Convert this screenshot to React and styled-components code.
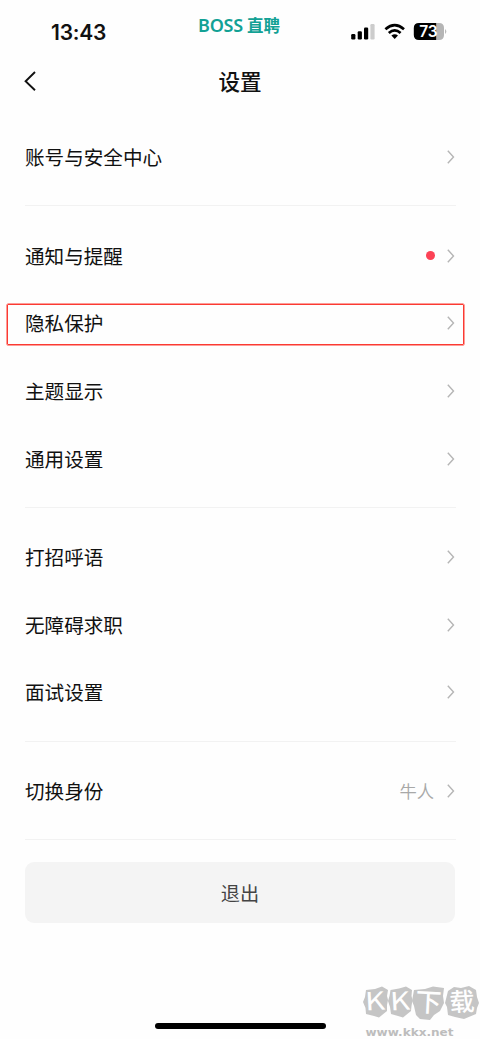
import React from "react";
import styled, { createGlobalStyle } from "styled-components";

const GlobalStyle = createGlobalStyle`
  * { box-sizing: border-box; }
  body { margin: 0; background: #fff; }
`;

const Screen = styled.main`
  position: relative;
  display: flex;
  flex-direction: column;
  width: 480px;
  height: 1039px;
  overflow: hidden;
  background: #fefefe;
  color: #111;
  font-family: "Noto Sans CJK SC", sans-serif;
`;

const StatusBar = styled.header`
  display: grid;
  grid-template-columns: 157px 164px 1fr;
  height: 54px;
`;

const Clock = styled.time`
  padding: 20px 0 0 51px;
  font: 600 21px/26px Inter, sans-serif;
  letter-spacing: -0.2px;
`;

const Brand = styled.div`
  display: flex;
  justify-content: center;
  gap: 4px;
  padding-top: 13px;
  color: #12a195;
  font: 700 16.5px/24px "Noto Sans CJK SC", sans-serif;
`;

const BrandLatin = styled.span`
  font-family: "Noto Sans", sans-serif;
  font-weight: 600;
  font-size: 18px;
  line-height: 25px;
  letter-spacing: -0.2px;
`;

const Indicators = styled.div`
  display: flex;
  align-items: flex-start;
  padding: 23px 0 0 30px;
`;

const IconSlot = styled.span`
  display: flex;
  width: ${(p) => p.$width}px;
`;

const NavBar = styled.nav`
  display: grid;
  grid-template-columns: 80px 320px 80px;
  align-items: center;
  height: 54px;
`;

const BackButton = styled.button`
  display: flex;
  padding: 0 0 0 23px;
  border: 0;
  background: none;
`;

const Title = styled.h1`
  margin: 0;
  text-align: center;
  font-size: 21.6px;
  font-weight: 500;
  line-height: 32px;
`;

const Group = styled.section`
  margin: 0 24px 0 25px;
  padding: 15.4px 0 14.45px;
  border-bottom: 1px solid #f2f2f2;
`;

const Row = styled.div`
  position: relative;
  display: flex;
  align-items: center;
  height: 67.67px;
`;

const Label = styled.span`
  flex: 1;
  font-size: 19.6px;
  line-height: 30px;
`;

const Value = styled.span`
  margin-right: 13px;
  color: #a8a8a8;
  font-size: 17.3px;
  font-weight: 350;
  line-height: 26px;
`;

const Dot = styled.i`
  width: 9px;
  height: 9px;
  margin-right: 12px;
  border-radius: 50%;
  background: #fc4256;
`;

const Highlight = styled.span`
  position: absolute;
  top: 14.7px;
  left: -18.5px;
  width: 457px;
  height: 41px;
  border: 1px solid #fb3a32;
  border-radius: 1px;
  box-shadow: 0 0 0 0.5px #fb3a32;
`;

const ChevronSlot = styled.span`
  display: flex;
  width: 9px;
`;

const LogoutButton = styled.button`
  height: 61px;
  margin: 22px 25px 0;
  border: 0;
  border-radius: 9px;
  background: #f4f4f4;
  color: #444;
  font: 400 19.2px/30px "Noto Sans CJK SC", sans-serif;
`;

const HomeIndicator = styled.div`
  width: 171px;
  height: 6px;
  margin: auto auto 10px 155px;
  border-radius: 3px;
  background: #000;
`;

const Watermark = styled.div`
  position: absolute;
  left: 360px;
  top: 982px;
  width: 120px;
  height: 57px;
`;

const Signal = () => (
  <svg width="25" height="17" viewBox="0 0 25 17">
    <rect x="0.2" y="11" width="4.2" height="5.4" rx="1.2" />
    <rect x="6.7" y="8.3" width="4.2" height="8.1" rx="1.2" />
    <rect x="13" y="4.6" width="4.2" height="11.8" rx="1.2" />
    <rect x="19.4" y="1" width="4.2" height="15.4" rx="1.2" fill="#ccc" />
  </svg>
);

const Wifi = () => (
  <svg width="22" height="17" viewBox="0 0 22 17">
    <g fill="none" stroke="#000" strokeWidth="2.7">
      <path d="M1.4 6.2Q10.7-2 20 6.2" />
      <path d="M4.8 9.9Q10.7 4.7 16.6 9.9" />
    </g>
    <path d="M7.4 12.6Q10.7 9.7 14 12.6L10.7 16Z" />
  </svg>
);

const Battery = () => (
  <svg width="35" height="18" viewBox="0 0 35 18">
    <path d="M6 0H23.5V17H6Q.8 17 .8 12V5Q.8 0 6 0Z" />
    <path d="M23.5 0H26Q31 0 31 5V12Q31 17 26 17H23.5Z" fill="#b5b5b5" />
    <path d="M32.2 6Q34.4 8.5 32.2 11Z" fill="#aaa" />
    <text x="15.4" y="14.2" textAnchor="middle" fill="#fff" fontFamily="Inter, sans-serif" fontWeight="600" fontSize="15.5">73</text>
  </svg>
);

const Chevron = () => (
  <svg width="8" height="14" viewBox="0 0 8 14" fill="none" stroke="#b5b5b5" strokeWidth="1.4">
    <path d="M.8.8L6.5 7L.8 13.2" />
  </svg>
);

function SettingRow({ label, value, dot, highlighted }) {
  return (
    <Row>
      {highlighted && <Highlight />}
      <Label>{label}</Label>
      {value && <Value>{value}</Value>}
      {dot && <Dot />}
      <ChevronSlot><Chevron /></ChevronSlot>
    </Row>
  );
}

const groups = [
  [{ label: "账号与安全中心" }],
  [
    { label: "通知与提醒", dot: true },
    { label: "隐私保护", highlighted: true },
    { label: "主题显示" },
    { label: "通用设置" },
  ],
  [{ label: "打招呼语" }, { label: "无障碍求职" }, { label: "面试设置" }],
  [{ label: "切换身份", value: "牛人" }],
];

export default function App() {
  return (
    <Screen>
      <GlobalStyle />
      <StatusBar>
        <Clock>13:43</Clock>
        <Brand><BrandLatin>BOSS</BrandLatin><span>直聘</span></Brand>
        <Indicators>
          <IconSlot $width={33}><Signal /></IconSlot>
          <IconSlot $width={29}><Wifi /></IconSlot>
          <Battery />
        </Indicators>
      </StatusBar>
      <NavBar>
        <BackButton aria-label="返回">
          <svg width="14" height="20" viewBox="0 0 14 20" fill="none" stroke="#111" strokeWidth="1.9">
            <path d="M12 1L2.6 10.2L12 19.2" />
          </svg>
        </BackButton>
        <Title>设置</Title>
      </NavBar>
      {groups.map((rows) => (
        <Group key={rows[0].label}>
          {rows.map((row) => <SettingRow key={row.label} {...row} />)}
        </Group>
      ))}
      <LogoutButton>退出</LogoutButton>
      <HomeIndicator />
      <Watermark>
        <svg width="120" height="57" viewBox="0 0 120 57">
          <g fill="#c5c5c5">
            <path d="M6 8L15 7L22 4.5L28 8L27 14L28 18L27 23L27 29L19 35.5L14 34L6 32L5.5 26L3 20L5 15Z" />
            <path d="M30.5 8L39 6.5L46 4.5L52 8L51.5 14L52.5 18L51.5 24L51 29L43 35.5L38 34L31 32L30 25L28 19L29.5 14Z" />
            <path d="M54 8L65 7L73 4.5L84 6L83 14L84 21L80 29L74 33L70 38L60 37L56 33L54 24L52 19Z" />
            <path d="M88 9L94 5L101 6L109 4L116 8L117 15L119 21L117 26L116 32L104 37L95 35L88 33L87 25L85 21Z" />
          </g>
          <g fill="#fefefe" fontFamily="'Noto Sans CJK SC', sans-serif">
            <text transform="translate(5.5 28.5) rotate(-3)" fontWeight="400" fontSize="25" textLength="20" lengthAdjust="spacingAndGlyphs">K</text>
            <text transform="translate(30.5 28.5) rotate(-3)" fontWeight="400" fontSize="25" textLength="20" lengthAdjust="spacingAndGlyphs">K</text>
            <text transform="translate(55 29) rotate(3)" fontWeight="500" fontSize="26">下</text>
            <text transform="translate(90 29.5) rotate(-3)" fontWeight="500" fontSize="25">载</text>
          </g>
          <text x="5.5" y="54" fill="#bdbdbd" fontFamily="'DejaVu Sans', sans-serif" fontWeight="700" fontSize="10.5" textLength="88" lengthAdjust="spacingAndGlyphs">www.kkx.net</text>
        </svg>
      </Watermark>
    </Screen>
  );
}
